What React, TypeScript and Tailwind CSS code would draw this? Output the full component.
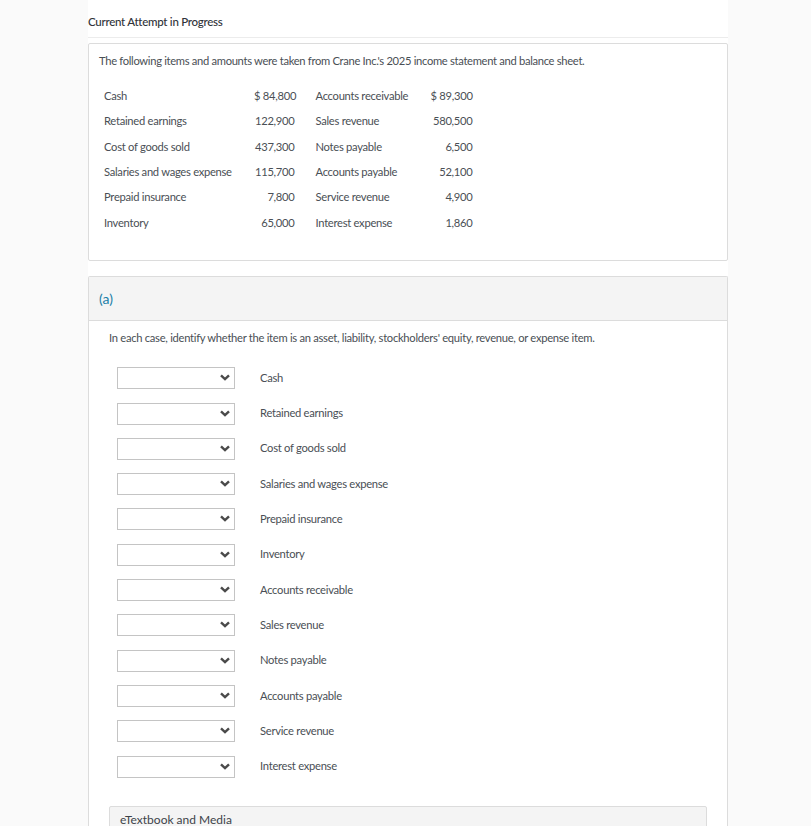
const table = [
  ["Cash", "$ 84,800", "Accounts receivable", "$ 89,300"],
  ["Retained earnings", "122,900", "Sales revenue", "580,500"],
  ["Cost of goods sold", "437,300", "Notes payable", "6,500"],
  ["Salaries and wages expense", "115,700", "Accounts payable", "52,100"],
  ["Prepaid insurance", "7,800", "Service revenue", "4,900"],
  ["Inventory", "65,000", "Interest expense", "1,860"],
];

const items = [
  "Cash",
  "Retained earnings",
  "Cost of goods sold",
  "Salaries and wages expense",
  "Prepaid insurance",
  "Inventory",
  "Accounts receivable",
  "Sales revenue",
  "Notes payable",
  "Accounts payable",
  "Service revenue",
  "Interest expense",
];

function Dropdown() {
  return (
    <div className="relative w-[118px] h-[22px]">
      <select className="block w-full h-full appearance-none bg-white border border-[#c4c4c4] rounded-none" aria-label="Classification">
        <option></option>
        <option>Asset</option>
        <option>Liability</option>
        <option>Stockholders' equity</option>
        <option>Revenue</option>
        <option>Expense</option>
      </select>
      <svg className="absolute right-[5px] top-[7px] pointer-events-none" width="10" height="8" viewBox="0 0 10 8" fill="none">
        <path d="M1 1.3 L5 5.1 L9 1.3" stroke="#4a4a4a" strokeWidth="2.4" />
      </svg>
    </div>
  );
}

export default function App() {
  return (
    <div className="h-[826px] overflow-hidden bg-[#fafafa] font-['Lato','Noto_Sans',sans-serif] text-[#4a4f55] text-[11.2px] tracking-[-0.31px]">
      <div className="ml-[88px] w-[640px] h-full bg-white">
        <div className="h-[38px] pt-[15px] border-b border-[#ececec] text-[#2f3338] text-[11.5px] tracking-[-0.27px] font-medium leading-[14px]">
          Current Attempt in Progress
        </div>
        <div className="mt-[5px] h-[218px] border border-[#dcdcdc] rounded-[2px] px-[10px] pt-[10px]">
          <p className="leading-[14px]">
            The following items and amounts were taken from Crane Inc.'s 2025 income statement and balance sheet.
          </p>
          <div className="mt-[15.6px] ml-[5px] grid grid-cols-[150px_40.5px_21px_115px_42px] auto-rows-[25.4px] items-center w-fit tracking-[-0.28px]">
            {table.map((r) => (
              <div key={r[0]} className="contents">
                <div className="whitespace-nowrap">{r[0]}</div>
                <div className="text-right whitespace-nowrap">{r[1]}</div>
                <div />
                <div className="whitespace-nowrap">{r[2]}</div>
                <div className="text-right whitespace-nowrap">{r[3]}</div>
              </div>
            ))}
          </div>
        </div>
        <div className="mt-[15px] border border-[#dcdcdc] rounded-t-[2px] border-b-0 h-[560px]">
          <div className="h-[44px] bg-[#f4f4f4] border-b border-[#dcdcdc] flex items-center px-[10px] text-[14px] tracking-normal text-[#1a7fa8]">
            (a)
          </div>
          <div className="px-[20px]">
            <p className="mt-[10px] leading-[14px] tracking-[-0.285px]">
              In each case, identify whether the item is an asset, liability, stockholders' equity, revenue, or expense item.
            </p>
            <div className="mt-[15.6px] ml-[8px] flex flex-col tracking-[-0.27px]">
              {items.map((it) => (
                <div key={it} className="h-[35.3px] flex items-center gap-[25px]">
                  <Dropdown />
                  <span>{it}</span>
                </div>
              ))}
            </div>
            <div className="mt-[21.4px] w-[598px] h-[40px] bg-[#f4f4f4] border border-[#dcdcdc] rounded-[2px] px-[10px] pt-[5px] text-[12px] tracking-normal leading-[16px] text-[#3d4349]">
              eTextbook and Media
            </div>
          </div>
        </div>
      </div>
    </div>
  );
}
